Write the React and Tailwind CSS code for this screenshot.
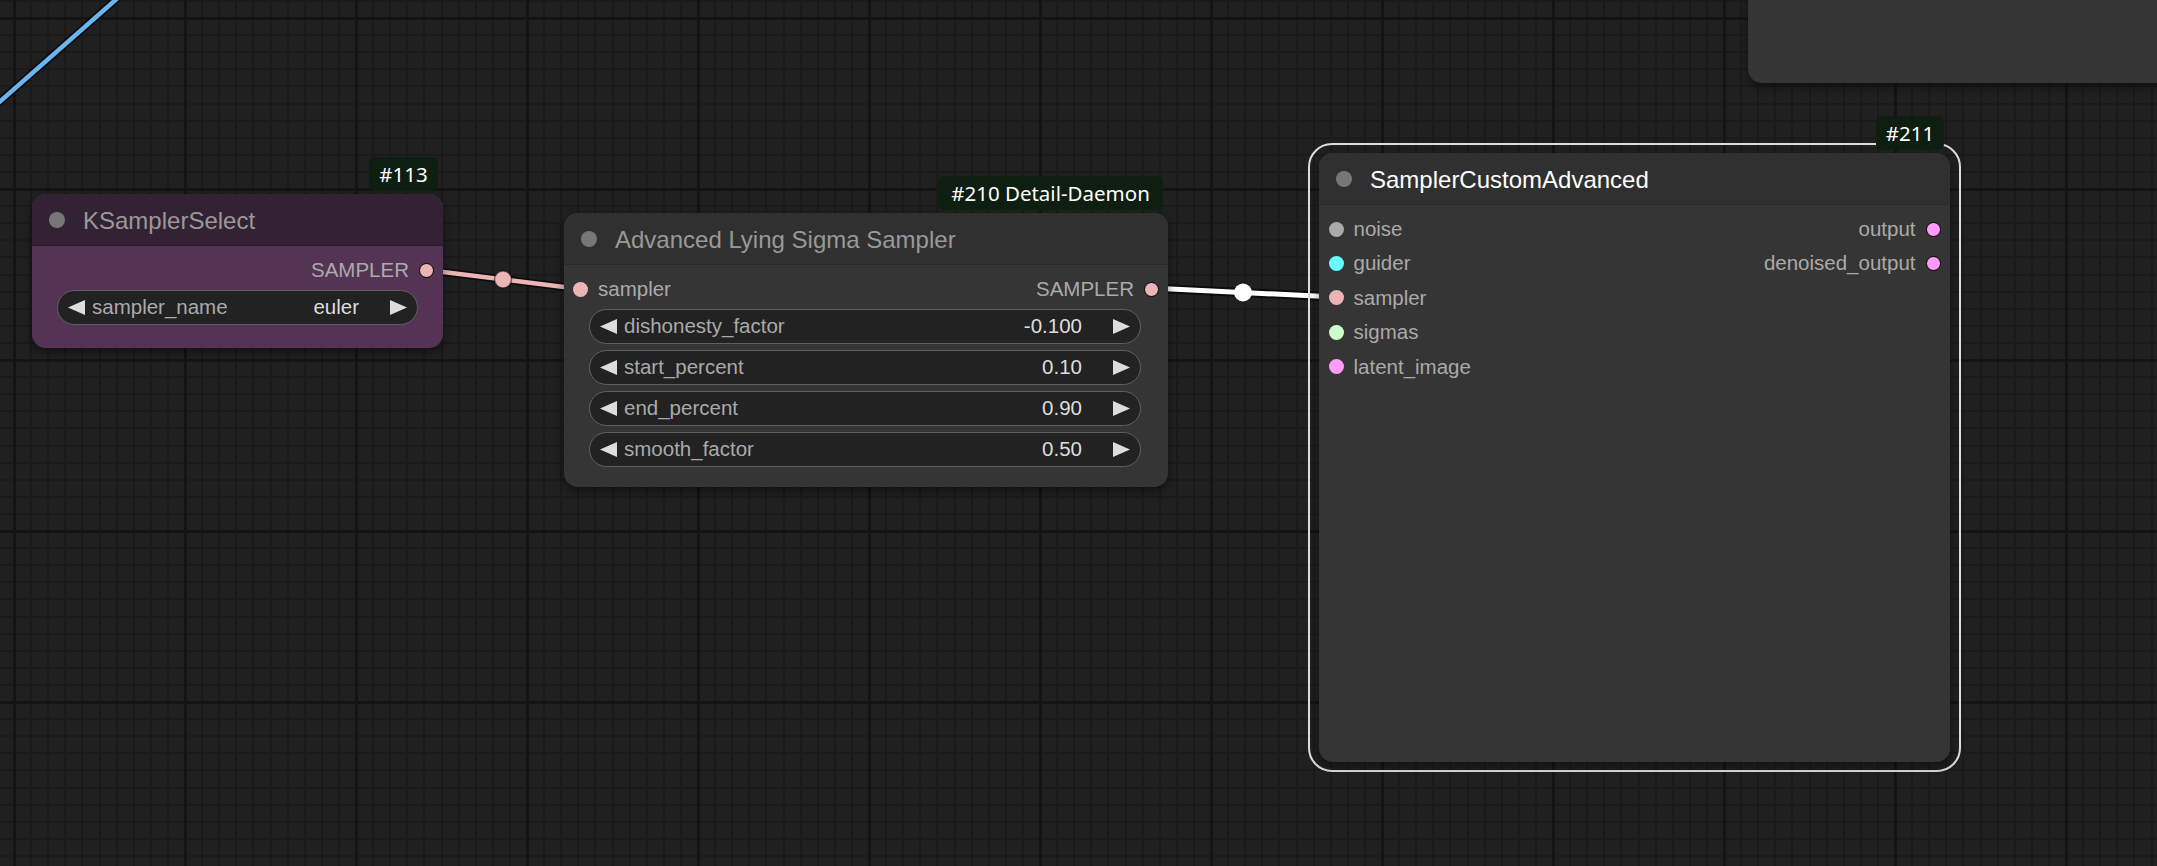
import React from 'react';

const W = 2157;
const H = 866;

const Grid = () => {
  const vx = [];
  for (let k = -1; k <= 126; k++) vx.push({ x: Math.round(14 + 17.1 * k), major: k % 10 === 0 });
  const hy = [];
  for (let k = -2; k <= 50; k++) hy.push({ y: Math.round(18 + 17.1 * k), major: k % 10 === 0 });
  return (
    <svg className="absolute inset-0" width={W} height={H}>
      {vx.filter(l => !l.major).map(l => (
        <rect key={'v' + l.x} x={l.x - 1} y={0} width={2} height={H} fill="#1a1a1a" />
      ))}
      {hy.filter(l => !l.major).map(l => (
        <rect key={'h' + l.y} x={0} y={l.y - 1} width={W} height={2} fill="#1a1a1a" />
      ))}
      {vx.filter(l => l.major).map(l => (
        <rect key={'V' + l.x} x={l.x - 1} y={0} width={3} height={H} fill="#141414" />
      ))}
      {hy.filter(l => l.major).map(l => (
        <rect key={'H' + l.y} x={0} y={l.y - 1} width={W} height={3} fill="#141414" />
      ))}
    </svg>
  );
};

const Links = () => (
  <svg className="absolute inset-0" width={W} height={H}>
    {/* blue link leaving the top left corner */}
    <line x1={-4} y1={105} x2={120} y2={-4} stroke="#000" strokeOpacity="0.6" strokeWidth="8" />
    <line x1={-4} y1={105} x2={120} y2={-4} stroke="#6ab6f0" strokeWidth="4.5" />

    {/* SAMPLER -> sampler */}
    <line x1={427} y1={270} x2={580} y2={289} stroke="#000" strokeOpacity="0.6" strokeWidth="8" />
    <line x1={427} y1={270} x2={580} y2={289} stroke="#ecb4b4" strokeWidth="4.5" />
    <circle cx={503} cy={279.5} r={8.5} fill="#ecb4b4" stroke="#000" strokeOpacity="0.5" strokeWidth="1.5" />

    {/* SAMPLER -> SamplerCustomAdvanced.sampler (selected) */}
    <line x1={1151} y1={288} x2={1336} y2={297} stroke="#000" strokeOpacity="0.6" strokeWidth="9" />
    <line x1={1151} y1={288} x2={1336} y2={297} stroke="#ffffff" strokeWidth="5" />
    <circle cx={1243} cy={292.5} r={9} fill="#ffffff" />
  </svg>
);

const Arrow = ({ dir }) => (
  <svg viewBox="0 0 10 12" preserveAspectRatio="none" className="w-[17px] h-[15px] shrink-0">
    <polygon points={dir === 'left' ? '10,0 10,12 0,6' : '0,0 0,12 10,6'} fill="#dddddd" />
  </svg>
);

const Widget = ({ label, value }) => (
  <div className="h-[35px] rounded-full bg-[#222222] border-[1.5px] border-[#616161] flex items-center text-[20.5px] leading-none">
    <span className="ml-[10px]"><Arrow dir="left" /></span>
    <span className="ml-[7px] flex-1 text-[#aaaaaa] whitespace-nowrap">{label}</span>
    <span className="text-[#dddddd] whitespace-nowrap">{value}</span>
    <span className="ml-[31px] mr-[10px] flex"><Arrow dir="right" /></span>
  </div>
);

const Badge = ({ children, className }) => (
  <div className={`absolute h-[34px] rounded-[6px] bg-[#0e1e10] flex items-center justify-center text-white text-[20.5px] leading-none font-['Noto_Sans',sans-serif] whitespace-nowrap ${className}`}>
    {children}
  </div>
);

const Title = ({ text, className }) => (
  <div className={`h-[52px] rounded-t-[14px] border-b flex items-center ${className}`}>
    <div className="ml-[17px] w-[16px] h-[16px] rounded-full bg-[#777777]" />
    <span className="ml-[18px] mt-[2px] text-[24px] leading-none whitespace-nowrap">{text}</span>
  </div>
);

const Dot = ({ color, output }) => (
  <div className={`w-[15px] h-[15px] rounded-full shrink-0 ${color} ${output ? 'border-[1.5px] border-black' : ''}`} />
);

const inputs = [
  { name: 'noise', color: 'bg-[#aaaaaa]' },
  { name: 'guider', color: 'bg-[#66ffff]' },
  { name: 'sampler', color: 'bg-[#ecb4b4]' },
  { name: 'sigmas', color: 'bg-[#cdffcd]' },
  { name: 'latent_image', color: 'bg-[#ff9cf9]' },
];

const outputs = ['output', 'denoised_output'];

export default function App() {
  return (
    <div className="relative w-[2157px] h-[866px] overflow-hidden bg-[#202020] font-['Liberation_Sans',Arial,sans-serif]">
      <Grid />
      <Links />

      {/* node peeking in at the top right */}
      <div className="absolute left-[1748px] top-[-30px] w-[440px] h-[113px] rounded-[14px] bg-[#353535] shadow-[0_4px_10px_rgba(0,0,0,0.45)]" />

      {/* #113 KSamplerSelect */}
      <div className="absolute left-[32px] top-[194px] w-[411px] h-[154px] rounded-[14px] bg-[#553355] shadow-[0_4px_10px_rgba(0,0,0,0.45)]">
        <Badge className="right-[5px] bottom-[calc(100%+3px)] w-[69px]">#113</Badge>
        <Title text="KSamplerSelect" className="bg-[#332233] border-[#2a1c2a] text-[#999999]" />
        <div className="pt-[7px]">
          <div className="h-[34px] flex items-center justify-end text-[20.5px] leading-none text-[#aaaaaa]">
            <span>SAMPLER</span>
            <span className="ml-[10px] mr-[9px]"><Dot color="bg-[#ecb4b4]" output /></span>
          </div>
          <div className="mt-[3px] mx-[25px]">
            <Widget label="sampler_name" value="euler" />
          </div>
        </div>
      </div>

      {/* #210 Advanced Lying Sigma Sampler */}
      <div className="absolute left-[564px] top-[213px] w-[604px] h-[274px] rounded-[14px] bg-[#353535] shadow-[0_4px_10px_rgba(0,0,0,0.45)]">
        <Badge className="right-[5px] bottom-[calc(100%+3px)] w-[225px]">#210 Detail-Daemon</Badge>
        <Title text="Advanced Lying Sigma Sampler" className="bg-[#303030] border-[#2a2a2a] text-[#999999]" />
        <div className="pt-[7px]">
          <div className="h-[34px] flex items-center text-[20.5px] leading-none text-[#aaaaaa]">
            <span className="ml-[9px]"><Dot color="bg-[#ecb4b4]" /></span>
            <span className="ml-[10px] flex-1">sampler</span>
            <span>SAMPLER</span>
            <span className="ml-[10px] mr-[9px]"><Dot color="bg-[#ecb4b4]" output /></span>
          </div>
          <div className="mt-[3px] ml-[25px] mr-[27px] flex flex-col gap-[6px]">
            <Widget label="dishonesty_factor" value="-0.100" />
            <Widget label="start_percent" value="0.10" />
            <Widget label="end_percent" value="0.90" />
            <Widget label="smooth_factor" value="0.50" />
          </div>
        </div>
      </div>

      {/* selection outline of #211 */}
      <div className="absolute left-[1308px] top-[143px] w-[653px] h-[629px] rounded-[24px] border-2 border-[#dddddd]" />

      {/* #211 SamplerCustomAdvanced */}
      <div className="absolute left-[1319px] top-[153px] w-[631px] h-[609px] rounded-[14px] bg-[#353535] shadow-[0_4px_10px_rgba(0,0,0,0.45)]">
        <Badge className="right-[6px] bottom-[calc(100%+3px)] w-[68px]">#211</Badge>
        <Title text="SamplerCustomAdvanced" className="bg-[#303030] border-[#2a2a2a] text-white" />
        <div className="pt-[7px] flex justify-between text-[20.5px] leading-none text-[#aaaaaa]">
          <div className="flex flex-col">
            {inputs.map(s => (
              <div key={s.name} className="h-[34.4px] flex items-center">
                <span className="ml-[9.5px]"><Dot color={s.color} /></span>
                <span className="ml-[10px] whitespace-nowrap">{s.name}</span>
              </div>
            ))}
          </div>
          <div className="flex flex-col items-end">
            {outputs.map(name => (
              <div key={name} className="h-[34.4px] flex items-center">
                <span className="whitespace-nowrap">{name}</span>
                <span className="ml-[10px] mr-[9.5px]"><Dot color="bg-[#ff9cf9]" output /></span>
              </div>
            ))}
          </div>
        </div>
      </div>
    </div>
  );
}
